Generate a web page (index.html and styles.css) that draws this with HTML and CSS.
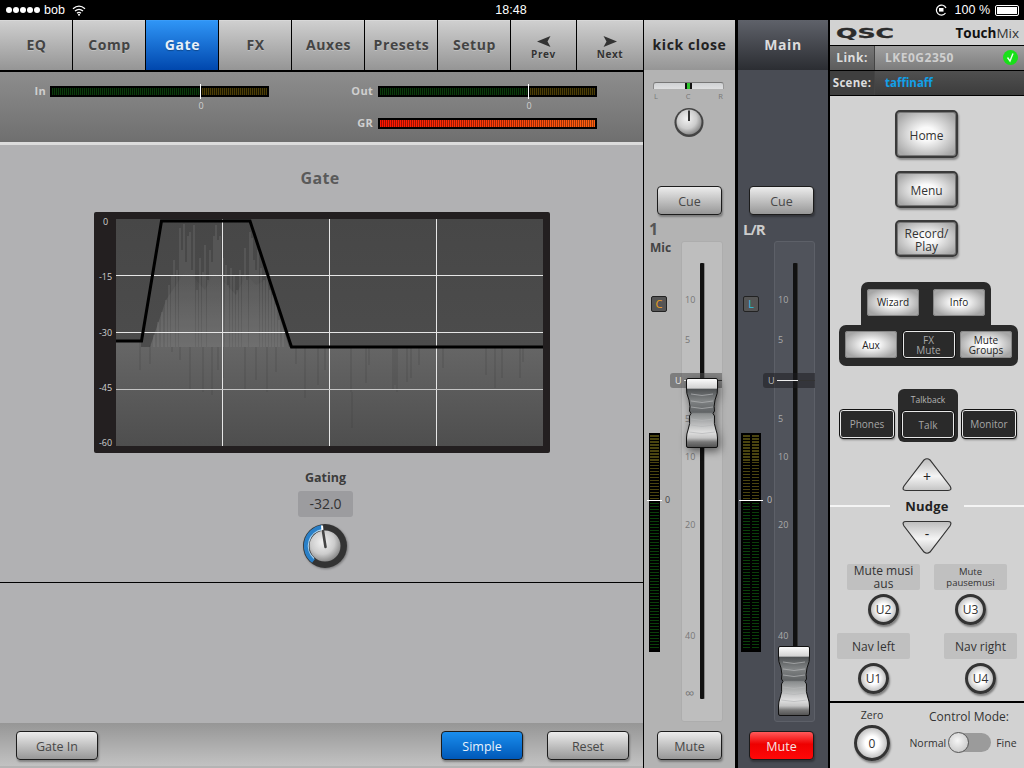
FILE: index.html
```html
<!DOCTYPE html>
<html lang="en">
<head>
<meta charset="utf-8">
<title>TouchMix Gate</title>
<link rel="stylesheet" href="styles.css">
</head>
<body>
<svg class="defs" width="0" height="0" aria-hidden="true">
  <defs>
    <radialGradient id="knobFace" cx="42%" cy="38%" r="70%">
      <stop offset="0" stop-color="#f2f2f2"/><stop offset=".55" stop-color="#cccccc"/><stop offset="1" stop-color="#777"/>
    </radialGradient>
    <linearGradient id="capFill" x1="0" y1="0" x2="0" y2="1">
      <stop offset="0" stop-color="#fdfdfd"/><stop offset=".14" stop-color="#d2d2d2"/><stop offset=".155" stop-color="#4e5153"/>
      <stop offset=".32" stop-color="#808384"/><stop offset=".49" stop-color="#606365"/><stop offset=".51" stop-color="#8a8d8e"/>
      <stop offset=".78" stop-color="#e0e0e0"/><stop offset=".86" stop-color="#c4c4c4"/><stop offset=".92" stop-color="#777"/><stop offset="1" stop-color="#505050"/>
    </linearGradient>
    <linearGradient id="triUp" x1="0" y1="0" x2="0" y2="1">
      <stop offset="0" stop-color="#bdbdbd"/><stop offset=".55" stop-color="#f4f4f4"/><stop offset="1" stop-color="#c4c4c4"/>
    </linearGradient>
    <symbol id="cap" viewBox="0 0 32 70">
      <path d="M2 .5H30Q31.500 .5 31.500 2V10Q32 15 29 22Q27.500 29 28.500 33L27 35.500L28.500 38Q27.500 46 30 52Q31.500 56 31.500 60V68Q31.500 69.500 30 69.500H2Q.5 69.500 .5 68V60Q.5 56 2 52Q4.500 46 3.500 38L5 35.500L3.500 33Q4.500 29 3 22Q0 15 .5 10V2Q.5 .5 2 .5Z" fill="url(#capFill)" stroke="#111" stroke-width="1"/>
      <path d="M5 16Q16 19 27 16M5 23Q16 26 27 23M5 29Q16 32 27 29M5 41Q16 44 27 41M5 47Q16 50 27 47M3 54Q16 57 29 54" fill="none" stroke="#b4b6b7" stroke-width=".7"/>
    </symbol>
  </defs>
</svg>
<div class="app">
  <header class="status">
    <div class="status-left">
      <span class="dots"><i></i><i></i><i></i><i></i><i></i></span>
      <span>bob</span>
      <svg class="wifi" width="14" height="11" viewBox="0 0 14 11"><path d="M1 3.800Q7 -1.500 13 3.800M3 6Q7 2.600 11 6M5 8.200Q7 6.500 9 8.200" fill="none" stroke="#fff" stroke-width="1.300"/><circle cx="7" cy="9.800" r="1" fill="#fff"/></svg>
    </div>
    <div class="status-time">18:48</div>
    <div class="status-right">
      <svg width="13" height="12" viewBox="0 0 13 12"><path d="M10.500 9A5 5 0 1 1 11 4" fill="none" stroke="#fff" stroke-width="1.200"/><rect x="4" y="4" width="4.500" height="3.600" fill="#fff"/></svg>
      <span class="batt-text">100 %</span>
      <span class="battery"></span>
    </div>
  </header>

  <div class="workspace">
    <section class="editor">
      <nav class="tabs">
        <div class="tab">EQ</div>
        <div class="tab">Comp</div>
        <div class="tab active">Gate</div>
        <div class="tab">FX</div>
        <div class="tab">Auxes</div>
        <div class="tab">Presets</div>
        <div class="tab">Setup</div>
        <div class="tab tab-nav">
          <svg width="14" height="11" viewBox="0 0 14 11"><path d="M0 5.500L13.500 0L10.500 5.500L13.500 11Z" fill="#333"/></svg>
          <span>Prev</span>
        </div>
        <div class="tab tab-nav tab-next">
          <svg width="14" height="11" viewBox="0 0 14 11"><path d="M14 5.500L.5 0L3.500 5.500L.5 11Z" fill="#333"/></svg>
          <span>Next</span>
        </div>
      </nav>

      <div class="meters">
        <div class="meter-col meter-col-in">
          <div class="meter-row"><span class="meter-name">In</span><div class="hmeter"><i class="hzero"></i></div></div>
          <div class="meter-zero">0</div>
        </div>
        <div class="meter-col meter-col-out">
          <div class="meter-row"><span class="meter-name">Out</span><div class="hmeter"><i class="hzero"></i></div></div>
          <div class="meter-zero">0</div>
          <div class="meter-row"><span class="meter-name">GR</span><div class="hmeter hmeter-red"></div></div>
        </div>
      </div>

      <div class="gate-pane">
        <h1 class="pane-title">Gate</h1>
        <div class="graph">
          <div class="yaxis"><span>0</span><span>-15</span><span>-30</span><span>-45</span><span>-60</span></div>
          <svg class="plot" width="427" height="227" viewBox="116 219 427 227">
            <defs>
              <linearGradient id="plotTop" x1="0" y1="0" x2="0" y2="1">
                <stop offset="0" stop-color="#474747"/><stop offset="1" stop-color="#505050"/>
              </linearGradient>
              <linearGradient id="plotLow" x1="0" y1="0" x2="0" y2="1">
                <stop offset="0" stop-color="#676767"/><stop offset="1" stop-color="#4e4e4e"/>
              </linearGradient>
              <linearGradient id="waveBody" x1="0" y1="0" x2="0" y2="1">
                <stop offset="0" stop-color="#676767" stop-opacity="0"/><stop offset="1" stop-color="#676767"/>
              </linearGradient>
            </defs>
            <rect x="116" y="219" width="427" height="227" fill="url(#plotTop)"/>
            <path d="M116 341H141V347H543V446H116Z" fill="url(#plotLow)"/>
            <path d="M150 347L166 300L176 285L186 270L196 280L205 290L214 272L224 282L236 295L246 275L256 285L266 280L276 305L289 347Z" fill="url(#waveBody)"/>
            <path d="M154 335V347M158 322V347M162 312V347M166 300V347M169 285V347M172 276V347M174 260V347M177 270V347M180 228V347M182 250V347M184 224V347M186 262V347M188 236V347M190 232V347M192 270V347M194 225V347M197 290V347M200 258V347M203 272V347M205 245V347M208 280V347M210 250V347M212 262V347M214 236V347M216 225V347M218 240V347M220 236V347M223 258V347M226 265V347M228 285V347M231 268V347M234 275V347M237 290V347M240 270V347M243 275V347M245 248V347M247 280V347M250 232V347M252 238V347M254 260V347M256 270V347M258 250V347M261 268V347M264 280V347M267 275V347M270 290V347M273 295V347M276 305V347M279 320V347M283 330V347"
              fill="none" stroke="#989898" stroke-opacity=".36" stroke-width="1"/>
            <path d="M140 341V370M150 345V364M172 347V352M180 347V360M190 347V390M203 347V392M212 347V395M218 347V370M223 347V378M245 347V390M256 347V380M267 347V392M276 347V372M296 348V364M305 348V398M318 348V385M325 348V370M351 348V392M352 392V428M366 348V383M369 348V365M393 348V390M395 348V385M397 348V392M407 348V382M411 348V378M419 348V365M443 348V368M486 348V375M495 348V388M502 348V378M520 348V378M523 348V362"
              fill="none" stroke="#3c3c3c" stroke-opacity=".35" stroke-width="1"/>
            <path d="M116 275.500H543M116 332.500H543M222.500 219V446M329.500 219V446M436.500 219V446" fill="none" stroke="#e6e6e6" stroke-width="1"/>
            <path d="M116 389.500H543" fill="none" stroke="#c4c4c4" stroke-width="1"/>
            <path d="M116 341H141.500L161.500 221H250L291.500 347H543" fill="none" stroke="#000" stroke-width="3"/>
          </svg>
        </div>
        <div class="gating">Gating</div>
        <div class="gating-value">-32.0</div>
        <svg class="gate-knob" width="44" height="44" viewBox="0 0 44 44">
          <circle cx="22" cy="22" r="22" fill="#333"/>
          <path d="M10.500 37A19 19 0 0 1 19 3.200" fill="none" stroke="#2a80c8" stroke-width="4.500"/>
          <path d="M11 34.500A16.500 16.500 0 0 1 19.500 5.700" fill="none" stroke="#a9d2ee" stroke-width="1.200"/>
          <circle cx="22" cy="22" r="15.500" fill="url(#knobFace)"/>
          <path d="M19 1.500L19.500 7" stroke="#fff" stroke-width="2"/>
          <path d="M22.500 23L20 7" stroke="#444" stroke-width="2.600" stroke-linecap="round"/>
        </svg>
      </div>

      <div class="empty-pane"></div>

      <footer class="editor-foot">
        <button class="btn btn-foot">Gate In</button>
        <div class="foot-right">
          <button class="btn btn-foot btn-blue">Simple</button>
          <button class="btn btn-foot">Reset</button>
        </div>
      </footer>
    </section>

    <section class="strip">
      <div class="strip-head">kick close</div>
      <div class="strip-body">
        <div class="pan"><i></i></div>
        <div class="pan-labels"><span>L</span><span>C</span><span>R</span></div>
        <svg class="pan-knob" width="30" height="30" viewBox="0 0 30 30">
          <circle cx="15" cy="15.500" r="14.500" fill="#444"/>
          <circle cx="15" cy="15" r="12.500" fill="url(#knobFace)"/>
          <path d="M15 3.500V14" stroke="#333" stroke-width="2"/>
        </svg>
        <button class="btn btn-strip btn-cue">Cue</button>
        <div class="fader-row">
          <div class="fader-left">
            <div class="ch-num">1</div>
            <div class="ch-name">Mic</div>
            <div class="badge badge-c">C</div>
            <div class="vmeter"><i class="v-zero"></i><span class="v-zero-label">0</span></div>
          </div>
          <div class="track">
            <span class="scale" style="top:52px">10</span>
            <span class="scale" style="top:92px">5</span>
            <span class="scale" style="top:171px">5</span>
            <span class="scale" style="top:209px">10</span>
            <span class="scale" style="top:277px">20</span>
            <span class="scale" style="top:388px">40</span>
            <span class="scale scale-inf" style="top:445px">∞</span>
            <div class="slot"></div>
            <div class="unity"><span>U</span><i></i></div>
            <svg class="cap cap-ch" width="32" height="70"><use href="#cap"/></svg>
          </div>
        </div>
        <button class="btn btn-strip btn-mute">Mute</button>
      </div>
    </section>

    <section class="strip strip-main">
      <div class="strip-head">Main</div>
      <div class="strip-body">
        <button class="btn btn-strip btn-cue">Cue</button>
        <div class="fader-row">
          <div class="fader-left">
            <div class="ch-num">L/R</div>
            <div class="ch-name">&nbsp;</div>
            <div class="badge badge-l">L</div>
            <div class="vmeter vmeter-st"><i class="v-zero"></i><span class="v-zero-label">0</span></div>
          </div>
          <div class="track">
            <span class="scale" style="top:52px">10</span>
            <span class="scale" style="top:92px">5</span>
            <span class="scale" style="top:171px">5</span>
            <span class="scale" style="top:209px">10</span>
            <span class="scale" style="top:277px">20</span>
            <span class="scale" style="top:388px">40</span>
            <div class="slot"></div>
            <div class="unity"><span>U</span><i></i></div>
            <svg class="cap cap-main" width="32" height="70"><use href="#cap"/></svg>
          </div>
        </div>
        <button class="btn btn-strip btn-mute btn-red">Mute</button>
      </div>
    </section>

    <aside class="side">
      <div class="brand">
        <svg class="qsc" width="58" height="14" viewBox="0 0 58 14"><text x="0" y="12" textLength="58" lengthAdjust="spacingAndGlyphs">QSC</text></svg>
        <div class="touchmix"><b>Touch</b>Mix</div>
      </div>
      <div class="info-row link-row">
        <div class="info-label">Link:</div>
        <div class="info-value">LKE0G2350
          <svg class="check" width="15" height="15" viewBox="0 0 15 15"><circle cx="7.500" cy="7.500" r="7.500" fill="#18e018"/><path d="M4.500 7.500L7 11L10 3.500" fill="none" stroke="#e8ffe8" stroke-width="1.400"/></svg>
        </div>
      </div>
      <div class="info-row scene-row">
        <div class="info-label">Scene:</div>
        <div class="info-value">taffinaff</div>
      </div>

      <div class="side-main">
        <button class="soft soft-home">Home</button>
        <button class="soft soft-menu">Menu</button>
        <button class="soft soft-rec">Record/<br>Play</button>

        <div class="dark-top">
          <button class="gloss">Wizard</button>
          <button class="gloss">Info</button>
        </div>
        <div class="dark-bottom">
          <button class="gloss">Aux</button>
          <button class="ink">FX<br>Mute</button>
          <button class="gloss">Mute<br>Groups</button>
        </div>

        <div class="talk-row">
          <button class="ink ink-wide">Phones</button>
          <div class="talk-group">
            <div class="talk-title">Talkback</div>
            <button class="ink">Talk</button>
          </div>
          <button class="ink ink-wide">Monitor</button>
        </div>

        <svg class="tri tri-up" width="50" height="34" viewBox="0 0 50 34">
          <path d="M22 2Q25 -.5 28 2L48 28Q50.500 32.500 46 32.500H4Q-.5 32.500 2 28Z" fill="url(#triUp)" stroke="#333" stroke-width="1.200"/>
          <text x="25" y="24">+</text>
        </svg>
        <div class="nudge"><i></i><span>Nudge</span><i></i></div>
        <svg class="tri tri-down" width="50" height="34" viewBox="0 0 50 34">
          <path d="M22 32Q25 34.500 28 32L48 6Q50.500 1.500 46 1.500H4Q-.5 1.500 2 6Z" fill="url(#triUp)" stroke="#333" stroke-width="1.200"/>
          <text x="25" y="19">-</text>
        </svg>

        <div class="user-row user-row-a">
          <div class="user">
            <div class="user-label">Mute musi<br>aus</div>
            <button class="round">U2</button>
          </div>
          <div class="user">
            <div class="user-label user-label-sm">Mute<br>pausemusi</div>
            <button class="round">U3</button>
          </div>
        </div>
        <div class="user-row user-row-b">
          <div class="user">
            <div class="user-label">Nav left</div>
            <button class="round">U1</button>
          </div>
          <div class="user">
            <div class="user-label">Nav right</div>
            <button class="round">U4</button>
          </div>
        </div>
      </div>

      <div class="side-foot">
        <div class="zero-block">
          <div class="zero-label">Zero</div>
          <button class="round round-lg">0</button>
        </div>
        <div class="mode">
          <div class="mode-title">Control Mode:</div>
          <div class="mode-row"><span>Normal</span><div class="toggle"><i></i></div><span>Fine</span></div>
        </div>
      </div>
    </aside>
  </div>
</div>
</body>
</html>
```

FILE: styles.css
```css
* { box-sizing: border-box; }
html, body { margin: 0; padding: 0; background: #000; }
body { font-family: "Open Sans", "Noto Sans", sans-serif; }
button { font-family: inherit; padding: 0; margin: 0; cursor: pointer; }
.defs { display: block; }
.app { width: 1024px; height: 768px; overflow: hidden; display: flex; flex-direction: column; background: #000; }

/* Status bar */
.status { height: 20px; display: grid; grid-template-columns: 1fr auto 1fr; align-items: center; color: #fff; font: 12.500px "Liberation Sans", sans-serif; }
.status-left { display: flex; align-items: center; padding-left: 6px; gap: 4px; }
.dots { display: flex; gap: 1px; }
.dots i { width: 6px; height: 6px; border-radius: 50%; background: #fff; }
.wifi { margin-left: 3px; }
.status-time { margin-left: -2px; }
.status-right { display: flex; justify-content: flex-end; align-items: center; padding-right: 5px; }
.batt-text { margin-left: 7px; margin-right: 5px; }
.battery { width: 24px; height: 11px; border: 1px solid #fff; border-radius: 2px; background: #fff; background-clip: content-box; padding: 1px; }

.workspace { flex: 1; display: flex; background: #000; }

/* Editor */
.editor { width: 643px; display: flex; flex-direction: column; }
.tabs { display: flex; gap: 1px; height: 50px; margin-bottom: 2px; }
.tab { width: 72px; flex: none; background: linear-gradient(#cfcfcf, #959595); border-top: 1px solid #d8d8d8; display: flex; align-items: center; justify-content: center; color: #444; font-size: 14px; font-weight: 700; letter-spacing: .6px; padding: 0 0 2px 1px; text-shadow: 0 1px 0 rgba(255,255,255,.25); }
.tab.active { background: linear-gradient(#2f95f6, #0047ad); border-top-color: #3a9cf8; color: #e6f0fa; text-shadow: 0 1px 1px rgba(0,0,0,.3); }
.tab-nav { width: 65px; flex-direction: column; gap: 1px; font-size: 10px; line-height: 12px; padding: 4px 0 0; color: #333; }
.tab-next { width: 66px; }

.meters { height: 70px; background: linear-gradient(#8d8d8d, #6f6f6f); display: flex; }
.meter-col { display: flex; flex-direction: column; padding-top: 13px; }
.meter-col-in { width: 328px; }
.meter-row { display: flex; align-items: center; height: 12px; }
.meter-name { font-size: 11px; font-weight: 700; color: #cfcfcf; text-align: right; letter-spacing: .3px; line-height: 12px; margin-top: -1px; }
.meter-col-in .meter-name { width: 46px; margin-right: 4px; }
.meter-col-out .meter-name { width: 45px; margin-right: 5px; }
.hmeter { width: 219px; height: 11px; position: relative; background: repeating-linear-gradient(90deg, #0a3a0a 0 1px, #021002 1px 2px) 2px 2px / 148px 7px no-repeat, repeating-linear-gradient(90deg, #4c3e06 0 1px, #181400 1px 2px) 152px 2px / 65px 7px no-repeat, #000; }
.hmeter-red { background: repeating-linear-gradient(90deg, transparent 0 1px, rgba(0,0,0,.4) 1px 2px) 2px 2px / 215px 7px no-repeat, linear-gradient(90deg, #ff1400, #ff6010) 2px 2px / 215px 7px no-repeat, #000; }
.hzero { position: absolute; left: 150px; top: -2px; width: 1px; height: 15px; background: #fff; }
.meter-zero { font-size: 9px; line-height: 12px; height: 20px; padding-top: 3px; color: #d0d0d0; width: 10px; text-align: center; margin-left: 196px; }

.gate-pane { height: 441px; background: #b1b1b3; border-top: 3px solid #dcdcdc; border-bottom: 1px solid #000; display: flex; flex-direction: column; align-items: center; }
.pane-title { margin: 22px 3px 0 0; font-size: 16px; line-height: 22px; font-weight: 700; color: #5a5a5a; letter-spacing: .3px; }
.graph { width: 456px; height: 241px; margin-top: 23px; margin-left: 1px; background: #231f20; border-radius: 2px; display: flex; padding: 7px 7px 7px 0; }
.yaxis { width: 22px; display: flex; flex-direction: column; justify-content: space-between; align-items: center; font-size: 9px; line-height: 12px; color: #cfcfcf; padding-left: 1px; margin-top: -3px; margin-bottom: -3px; }
.plot { display: block; }
.gating { margin: 16px 0 0 8px; font-size: 12.500px; line-height: 18px; font-weight: 700; color: #3c3c3c; }
.gating-value { margin: 4px 0 0 8px; width: 55px; height: 26px; background: #9c9c9f; border-radius: 3px; text-align: center; font-size: 14px; line-height: 26px; color: #333; }
.gate-knob { margin: 7px 0 0 7px; display: block; filter: drop-shadow(1px 1px 1px rgba(0,0,0,.35)); }

.empty-pane { height: 140px; background: #b1b1b3; }
.editor-foot { height: 45px; background: linear-gradient(#969696, #c2c2c2); border-bottom: 2px solid #b4b4b4; padding: 8px 14px 0 16px; display: flex; justify-content: space-between; align-items: flex-start; }
.foot-right { display: flex; gap: 24px; }

/* Buttons */
.btn { border: 1px solid #1c1c1c; border-radius: 4px; background: linear-gradient(#ececec, #979797); color: #484848; font-size: 12.500px; padding-top: 1px; box-shadow: 1px 2px 2px rgba(0,0,0,.3); }
.btn-foot { width: 82px; height: 29px; }
.btn-blue { background: linear-gradient(#1a8eee, #0058b8); color: #e8f2fc; }
.btn-strip { display: block; width: 65px; height: 29px; }
.btn-red { background: linear-gradient(#ff5a5a, #ee0000 45%, #ff0808); color: #f4e4e4; }

/* Channel strips */
.strip { width: 91px; margin-left: 1px; background: #b3b3b3; display: flex; flex-direction: column; }
.strip-head { height: 50px; margin-bottom: 2px; flex: none; display: flex; align-items: center; justify-content: center; padding-bottom: 2px; background: linear-gradient(#d0d0d0, #959595); color: #222; font-size: 14px; font-weight: 700; letter-spacing: .6px; }
.strip-body { flex: 1; background: #b3b3b3; padding: 10px 0 0; }
.pan { width: 71px; height: 7px; margin-left: 9px; position: relative; border-radius: 3px 3px 0 0; background: linear-gradient(#cfd1d3, #dfe0e1); border-top: 1px solid #777; border-left: 1px solid #888; border-right: 1px solid #999; }
.pan i { position: absolute; left: 31px; top: 0; width: 7px; height: 6px; background: #2fc62f; border-left: 2px solid #111; border-right: 2px solid #111; }
.pan-labels { width: 71px; margin-left: 9px; margin-top: 3px; display: flex; justify-content: space-between; padding: 0 1px; font-size: 7.500px; line-height: 8px; color: #777; height: 8px; }
.pan-knob { display: block; margin: 7px 0 0 30px; }
.btn-cue { margin-left: 13px; margin-top: 49px; }
.fader-row { display: flex; margin-top: 6px; }
.fader-left { width: 37px; padding-left: 5px; position: relative; flex: none; }
.ch-num { font-size: 16px; font-weight: 700; line-height: 18px; color: #555; margin-top: -1px; }
.ch-name { font-size: 12px; font-weight: 700; line-height: 16px; color: #444; margin: 2px 0 0 1px; height: 16px; }
.badge { width: 16px; height: 16px; margin: 40px 0 0 2px; background: #555; border: 1px solid #222; border-radius: 2px; font-size: 11px; line-height: 14px; text-align: center; }
.badge-c { color: #f0a020; }
.badge-l { color: #30c0e0; }
.vmeter { width: 11px; height: 219px; margin: 121px 0 0; position: relative; background: repeating-linear-gradient(#0a3f0a 0 1.500px, #000 1.500px 3px) 1px 67px / 9px 150px no-repeat, repeating-linear-gradient(#4a4410 0 1.500px, #000 1.500px 3px) 1px 2px / 9px 65px no-repeat, #000; }
.vmeter-st { width: 20px; background: repeating-linear-gradient(#0a3f0a 0 1.500px, #000 1.500px 3px) 2px 67px / 7px 150px no-repeat, repeating-linear-gradient(#0a3f0a 0 1.500px, #000 1.500px 3px) 11px 67px / 7px 150px no-repeat, repeating-linear-gradient(#4a4410 0 1.500px, #000 1.500px 3px) 2px 2px / 7px 65px no-repeat, repeating-linear-gradient(#4a4410 0 1.500px, #000 1.500px 3px) 11px 2px / 7px 65px no-repeat, #000; }
.v-zero { position: absolute; left: -2px; right: -2px; top: 67px; height: 1px; background: #fff; }
.v-zero-label { position: absolute; left: 16px; top: 61px; font-size: 9px; line-height: 12px; color: #444; }
.vmeter-st .v-zero-label { left: 26px; color: #bbb; }
.track { width: 42px; height: 481px; margin-top: 20px; position: relative; background: #bebebe; border: 1px solid #adadad; border-radius: 3px; }
.scale { position: absolute; left: 3px; font-size: 9px; line-height: 12px; color: #777; }
.scale-inf { font-size: 13px; }
.slot { position: absolute; left: 18px; top: 21px; width: 4px; height: 436px; background: #111; border-radius: 1px; box-shadow: 1px 0 0 #888; }
.unity { position: absolute; left: -12px; top: 131px; width: 52px; height: 15px; border-radius: 3px 0 0 3px; background: rgba(80,80,80,.55); display: flex; align-items: center; padding-left: 5px; color: #e8e8e8; font-size: 9px; }
.unity i { flex: 1; height: 1px; margin-left: 2px; background: linear-gradient(90deg, #eee 0 55%, #333 55%); }
.cap { position: absolute; display: block; }
.cap-ch { left: 4px; top: 136px; filter: drop-shadow(2px 3px 4px rgba(0,0,0,.55)); }
.cap-main { left: 3px; top: 404px; }
.btn-mute { margin: 9px 0 0 13px; }

.strip-main { width: 90px; margin-left: 3px; margin-right: 2px; background: #494c54; }
.strip-main .strip-head { background: linear-gradient(#5f626a, #2b2d32); color: #dcdcdc; }
.strip-main .strip-body { background: #494c54; padding-top: 114px; }
.strip-main .btn-cue { margin: 0 0 0 11px; }
.strip-main .btn-mute { margin-left: 11px; }
.strip-main .fader-left { width: 36px; padding-left: 3px; }
.strip-main .ch-num { font-size: 15px; letter-spacing: -1px; color: #ccc; margin-left: 2px; }
.strip-main .badge { margin-left: 2px; }
.strip-main .track { background: #50535b; border-color: #5d6068; width: 41px; }
.strip-main .scale { color: #aaa; }
.strip-main .unity { background: rgba(30,30,32,.55); color: #bbb; }
.strip-main .slot { box-shadow: 1px 0 0 #333; height: 400px; }

/* Sidebar */
.side { width: 194px; background: #d2d2d2; display: flex; flex-direction: column; }
.brand { height: 25px; display: flex; align-items: center; justify-content: space-between; padding: 0 5px 0 6px; }
.qsc { display: block; margin-top: 1px; }
.qsc text { font: 700 14px "DejaVu Sans", sans-serif; fill: #2c2c2c; stroke: #2c2c2c; stroke-width: .3px; }
.touchmix { font-size: 13.500px; color: #333; }
.touchmix b { color: #111; }
.info-row { display: flex; border-top: 1px solid #000; height: 25px; font-size: 12px; font-weight: 700; letter-spacing: .5px; line-height: 24px; }
.info-label { width: 45px; text-align: center; white-space: nowrap; color: #ddd; border-right: 1px solid #444; }
.info-value { flex: 1; padding-left: 10px; position: relative; }
.link-row .info-label { background: linear-gradient(#777, #5c5c5c); }
.link-row .info-value { background: linear-gradient(#a0a0a0, #7c7c7c); color: #cfcfcf; }
.scene-row { border-bottom: 1px solid #000; height: 26px; }
.scene-row .info-label { background: #3f3f3f; font-size: 11.500px; letter-spacing: .3px; }
.scene-row .info-value { background: linear-gradient(#505050, #3c3c3c); color: #12a0e8; font-size: 11.500px; letter-spacing: 0; }
.check { position: absolute; right: 6px; top: 4px; }
.side-main { height: 606px; display: flex; flex-direction: column; align-items: center; padding-top: 14px; }

.soft { width: 63px; margin-right: 1px; border: 2px solid #3a3a3a; border-radius: 5px; background: radial-gradient(closest-side, #fafafa 30%, #a8a8a8 120%); color: #333; font-size: 12px; line-height: 13px; padding-top: 1px; box-shadow: 1px 2px 2px rgba(0,0,0,.35), inset 0 0 0 1px #777; }
.soft-home { height: 48px; padding-top: 2px; }
.soft-menu { height: 37px; margin-top: 13px; }
.soft-rec { height: 37px; margin-top: 12px; padding-top: 2px; }

.dark-top { width: 130px; height: 44px; margin: 25px 2px 0 0; background: #2a2a2a; border-radius: 7px 7px 0 0; display: flex; justify-content: space-between; padding: 7px 6px 0; }
.dark-top .gloss { padding-bottom: 2px; }
.dark-bottom { width: 179px; height: 41px; margin: -1px 0 0 3px; background: #2a2a2a; border-radius: 7px; display: flex; justify-content: space-between; padding: 6px 6px 0; }
.dark-bottom button { padding-top: 1px; }
.gloss, .ink { width: 52px; height: 27px; font-size: 10px; line-height: 10px; border-radius: 3px; }
.gloss { border: 0; background: radial-gradient(closest-side, #fff 25%, #a6a6a6 110%); color: #222; box-shadow: inset 0 0 0 1px #888; }
.ink { background: #2a2a2a; border: 1px solid #e8e8e8; outline: 1px solid #111; color: #a6a6a6; }
.talk-row { display: flex; align-items: flex-end; gap: 4px; margin: 23px 0 0 2px; }
.talk-group { width: 60px; height: 53px; background: #2a2a2a; border-radius: 6px; padding: 0 4px; text-align: center; }
.talk-title { font-size: 8.500px; line-height: 22px; color: #b4b4b4; }
.talk-group .ink { height: 27px; }
.ink-wide { width: 54px; height: 28px; margin-bottom: 4px; box-shadow: 1px 2px 2px rgba(0,0,0,.4); }
.tri { display: block; }
.tri text { font-size: 14px; text-anchor: middle; fill: #222; }
.tri-up { margin-top: 16px; }
.nudge { width: 194px; height: 28px; display: flex; align-items: center; justify-content: space-between; font-size: 13px; font-weight: 700; color: #222; letter-spacing: .2px; }
.nudge i { width: 60px; height: 2px; background: #f4f4f4; }
.user-row { display: flex; justify-content: space-between; }
.user-row-a { width: 160px; margin-top: 10px; }
.user-row-b { width: 180px; margin-top: 8px; }
.user { width: 73px; display: flex; flex-direction: column; align-items: center; }
.user-label { width: 73px; height: 26px; background: #c0c0c0; border-radius: 2px; display: flex; align-items: center; justify-content: center; text-align: center; color: #333; font-size: 12px; line-height: 13px; }
.user-label-sm { font-size: 9.500px; line-height: 11px; }
.round { width: 31px; height: 31px; margin-top: 4px; border-radius: 50%; border: 3px solid #333; background: radial-gradient(closest-side, #fff 45%, #b8b8b8 110%); color: #333; font-size: 12px; box-shadow: 1px 2px 2px rgba(0,0,0,.4); }
.side-foot { flex: 1; border-top: 2px solid #000; display: flex; margin-top: -1px; padding-top: 5px; }
.zero-block { width: 72px; padding-left: 12px; flex: none; display: flex; flex-direction: column; align-items: center; }
.zero-label { font-size: 10.500px; line-height: 14px; color: #333; }
.round-lg { width: 36px; height: 36px; margin-top: 3px; }
.mode { flex: 1; display: flex; flex-direction: column; align-items: center; padding-top: 1px; }
.mode-title { font-size: 12px; line-height: 16px; color: #333; margin-left: 12px; }
.mode-row { display: flex; align-items: center; gap: 3px; margin-top: 8px; font-size: 10.500px; color: #333; }
.toggle { width: 42px; height: 19px; background: #9b9b9b; border-radius: 10px; position: relative; margin-right: 2px; }
.toggle i { position: absolute; left: -1px; top: -1px; width: 21px; height: 21px; border-radius: 50%; background: radial-gradient(circle at 45% 40%, #f6f6f6, #bdbdbd); border: 1px solid #555; }
```
